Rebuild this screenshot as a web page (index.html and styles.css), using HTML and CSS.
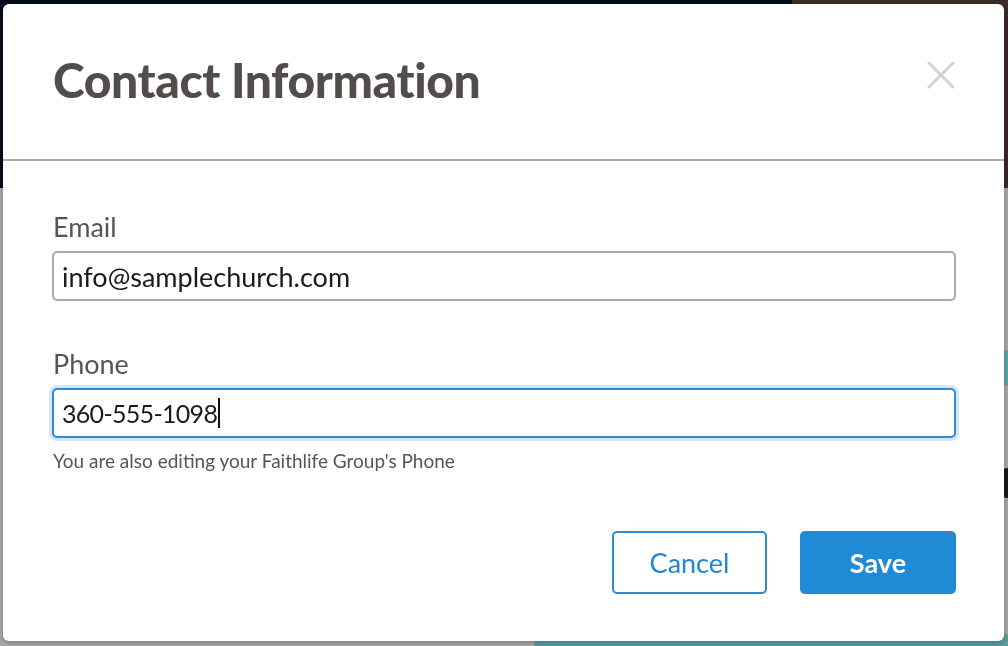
FILE: index.html
```html
<!DOCTYPE html>
<html lang="en">
<head>
    <meta charset="UTF-8">
    <meta name="viewport" content="width=device-width, initial-scale=1.0">
    <title>Contact Information</title>
    <link rel="stylesheet" href="styles.css">
</head>
<body>
    <div class="page">
        <div class="hero">
            <div class="hero-photo"></div>
        </div>
        <div class="content">
            <div class="content-side">
                <span class="side-dot teal"></span>
                <span class="side-dot dark"></span>
            </div>
            <div class="content-foot">
                <div class="foot-grey"></div>
                <div class="foot-teal"></div>
            </div>
        </div>
    </div>

    <div class="backdrop">
        <div class="modal">
            <div class="modal-header">
                <h2>Contact Information</h2>
                <button class="close" type="button" aria-label="Close">
                    <svg width="28" height="28" viewBox="0 0 28 28">
                        <path d="M2 2L26 26M26 2L2 26" stroke="#d2d2d2" stroke-width="3" stroke-linecap="round"/>
                    </svg>
                </button>
            </div>
            <form class="modal-body">
                <label for="email">Email</label>
                <input type="text" id="email" name="email" value="info@samplechurch.com">

                <label for="phone" class="second">Phone</label>
                <div class="field focused" id="phone">
                    <span class="field-text phone-text">360-555-1098</span><span class="caret"></span>
                </div>
                <p class="hint">You are also editing your Faithlife Group's Phone</p>

                <div class="actions">
                    <button type="button" class="btn btn-outline">Cancel</button>
                    <button type="submit" class="btn btn-primary">Save</button>
                </div>
            </form>
        </div>
    </div>
</body>
</html>
```

FILE: styles.css
```css
* {
    box-sizing: border-box;
}
body {
    margin: 0;
    font-family: Lato, "Noto Sans", sans-serif;
    background-color: #a9a9a9;
    color: #333;
    overflow: hidden;
}
.page {
    height: 646px;
    display: flex;
    flex-direction: column;
}
.hero {
    height: 188px;
    background-color: #050c1c;
    display: flex;
    justify-content: flex-end;
}
.hero-photo {
    width: 216px;
    background-color: #3b2b27;
}
.content {
    flex: 1;
    display: flex;
    flex-direction: column;
}
.content-side {
    flex: 1;
    display: flex;
    flex-direction: column;
    align-items: flex-end;
    padding-top: 162px;
    gap: 82px;
}
.side-dot {
    width: 14px;
    height: 36px;
    border-radius: 18px 0 0 18px;
}
.side-dot.teal {
    background-color: #5fa3a6;
}
.side-dot.dark {
    background-color: #1a1a1a;
    height: 30px;
}
.content-foot {
    height: 12px;
    display: flex;
}
.foot-grey {
    width: 534px;
}
.foot-teal {
    flex: 1;
    background-color: #5a9fa0;
}

.backdrop {
    position: fixed;
    top: 0;
    left: 0;
    right: 0;
    bottom: 0;
    padding: 4px 4px 5px 3px;
}
.modal {
    height: 100%;
    background-color: #fff;
    border-radius: 6px;
    box-shadow: 0 2px 6px rgba(0, 0, 0, 0.25);
}
.modal-header {
    height: 157px;
    border-bottom: 2px solid #ababab;
    display: flex;
    align-items: center;
    justify-content: space-between;
    padding: 0 48px 4px 50px;
}
.modal-header h2 {
    margin: 0;
    font-size: 48px;
    font-weight: 900;
    color: #524d4b;
    letter-spacing: -0.4px;
}
.close {
    background: none;
    border: none;
    padding: 0;
    margin-right: 1px;
    margin-bottom: 10px;
    cursor: pointer;
    display: flex;
}
.modal-body {
    padding: 51px 48px 0 49px;
}
label {
    display: block;
    font-size: 27px;
    color: #555;
    margin: 0 0 9px 1px;
    line-height: 30px;
}
label.second {
    margin-top: 48px;
}
input, .field {
    display: block;
    width: 100%;
    height: 50px;
    padding: 0 8px;
    font-family: inherit;
    font-size: 27px;
    color: #1a1a1a;
    border: 2px solid #a9a9a9;
    border-radius: 5px;
    background: #fff;
    outline: none;
}
.field {
    display: flex;
    align-items: center;
}
.field.focused {
    border-color: #2b8bd4;
    box-shadow: 0 0 0 3px #d3e7f8;
}
.phone-text {
    font-size: 25px;
    letter-spacing: -0.7px;
}
.caret {
    width: 2px;
    height: 30px;
    background-color: #111;
    margin-left: 1px;
}
.hint {
    margin: 11px 0 0 1px;
    font-size: 19px;
    color: #555;
}
.actions {
    display: flex;
    justify-content: flex-end;
    gap: 33px;
    margin-top: 59px;
}
.btn {
    height: 63px;
    font-family: inherit;
    font-size: 27px;
    border-radius: 5px;
    cursor: pointer;
}
.btn-outline {
    width: 155px;
    background: #fff;
    color: #1f88d1;
    border: 2px solid #2b8bd4;
}
.btn-primary {
    width: 156px;
    background-color: #1f8ad6;
    color: #fff;
    font-weight: 700;
    border: none;
}
.btn-primary:hover {
    background-color: #1a78bb;
}
```
